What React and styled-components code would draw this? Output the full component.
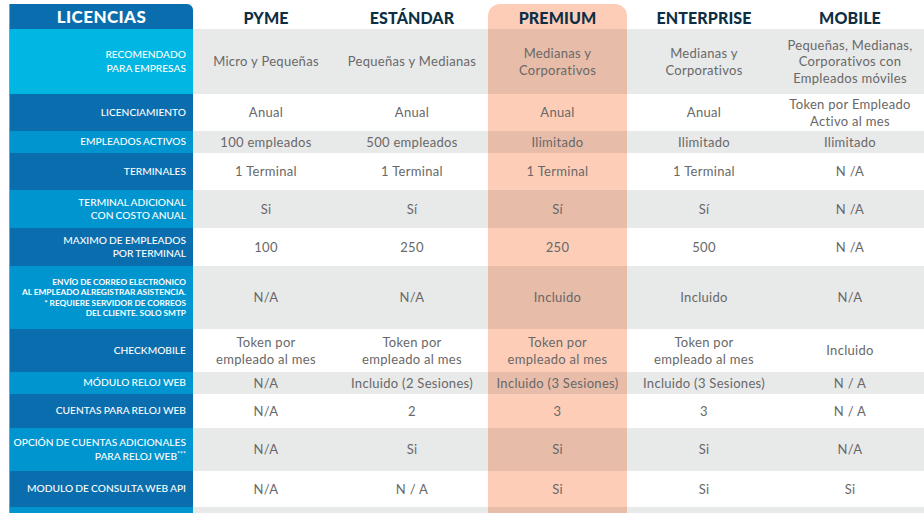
import styled, { createGlobalStyle } from 'styled-components';

const GlobalStyle = createGlobalStyle`
    html, body {
        margin: 0;
        padding: 0;
        background: #fff;
        overflow: hidden;
    }
    body {
        font-family: Lato, "Open Sans", sans-serif;
    }
`;

const Page = styled.div`
    padding: 4px 0 0 9px;
    height: 509px;
    overflow: hidden;
`;

const Row = styled.div`
    display: grid;
    grid-template-columns: 184px repeat(5, 146px);
    height: ${p => p.$h}px;
    background: ${p => (p.$alt ? '#e8e9e9' : '#fff')};
`;

const labelTones = {
    head: '#0a6eae',
    light: '#00b7e3',
    mid: '#0095cf',
    dark: '#0a6eae',
};

const Label = styled.div`
    display: flex;
    align-items: center;
    justify-content: flex-end;
    text-align: right;
    white-space: nowrap;
    padding-right: 7px;
    background: ${p => labelTones[p.$tone]};
    border-left: 1px solid #5fa9d9;
    color: #fff;
    font-size: ${p => (p.$small ? '8.3px' : '10.2px')};
    line-height: ${p => (p.$small ? '10.5px' : '13.5px')};
    font-weight: ${p => (p.$small ? 700 : 500)};
    text-transform: uppercase;
    word-spacing: ${p => (p.$small ? '-0.2px' : '-0.4px')};

    sup {
        font-size: 7px;
        vertical-align: 3px;
        line-height: 0;
    }
`;

const HeadLabel = styled(Label)`
    justify-content: center;
    padding-right: 0;
    font-size: 17px;
    font-weight: 900;
    border-top-right-radius: 6px;
    letter-spacing: 0.4px;
    word-spacing: 0;
`;

const Cell = styled.div`
    display: flex;
    align-items: center;
    justify-content: center;
    text-align: center;
    color: #686868;
    font-size: 13px;
    line-height: 16.5px;
    letter-spacing: 0.3px;
    margin: ${p => (p.$premium ? '0 4px 0 3px' : '0')};
    background: ${p =>
        p.$premium ? (p.$alt ? '#e7bca9' : '#fdcdb8') : 'transparent'};
`;

const Title = styled(Cell)`
    color: #0d2f45;
    font-size: 16px;
    font-weight: 900;
    letter-spacing: 0.1px;
    padding-top: 4px;
    border-radius: ${p => (p.$premium ? '12px 12px 0 0' : '0')};
`;

const plans = ['PYME', 'ESTÁNDAR', 'PREMIUM', 'ENTERPRISE', 'MOBILE'];
const PREMIUM = 2;

const rows = [
    {
        h: 65, tone: 'light',
        label: ['RECOMENDADO', 'PARA EMPRESAS'],
        values: [
            ['Micro y Pequeñas'],
            ['Pequeñas y Medianas'],
            ['Medianas y', 'Corporativos'],
            ['Medianas y', 'Corporativos'],
            ['Pequeñas, Medianas,', 'Corporativos con', 'Empleados móviles'],
        ],
    },
    {
        h: 37, label: ['LICENCIAMIENTO'],
        values: [['Anual'], ['Anual'], ['Anual'], ['Anual'], ['Token por Empleado', 'Activo al mes']],
    },
    {
        h: 22, label: ['EMPLEADOS ACTIVOS'],
        values: [['100 empleados'], ['500 empleados'], ['Ilimitado'], ['Ilimitado'], ['Ilimitado']],
    },
    {
        h: 37, label: ['TERMINALES'],
        values: [['1 Terminal'], ['1 Terminal'], ['1 Terminal'], ['1 Terminal'], ['N /A']],
    },
    {
        h: 38, label: ['TERMINAL ADICIONAL', 'CON COSTO ANUAL'],
        values: [['Si'], ['Sí'], ['Sí'], ['Sí'], ['N /A']],
    },
    {
        h: 38, label: ['MAXIMO DE EMPLEADOS', 'POR TERMINAL'],
        values: [['100'], ['250'], ['250'], ['500'], ['N /A']],
    },
    {
        h: 63, small: true,
        label: [
            'ENVÍO DE CORREO ELECTRÓNICO',
            'AL EMPLEADO ALREGISTRAR ASISTENCIA.',
            '* REQUIERE SERVIDOR DE CORREOS',
            'DEL CLIENTE. SOLO SMTP',
        ],
        values: [['N/A'], ['N/A'], ['Incluido'], ['Incluido'], ['N/A']],
    },
    {
        h: 43, label: ['CHECKMOBILE'],
        values: [
            ['Token por', 'empleado al mes'],
            ['Token por', 'empleado al mes'],
            ['Token por', 'empleado al mes'],
            ['Token por', 'empleado al mes'],
            ['Incluido'],
        ],
    },
    {
        h: 22, label: ['MÓDULO RELOJ WEB'],
        values: [['N/A'], ['Incluido (2 Sesiones)'], ['Incluido (3 Sesiones)'], ['Incluido (3 Sesiones)'], ['N / A']],
    },
    {
        h: 34, label: ['CUENTAS PARA RELOJ WEB'],
        values: [['N/A'], ['2'], ['3'], ['3'], ['N / A']],
    },
    {
        h: 43, label: ['OPCIÓN DE CUENTAS ADICIONALES', 'PARA RELOJ WEB'], sup: true,
        values: [['N/A'], ['Si'], ['Si'], ['Si'], ['N/A']],
    },
    {
        h: 36, label: ['MODULO DE CONSULTA WEB API'],
        values: [['N/A'], ['N / A'], ['Si'], ['Si'], ['Si']],
    },
    {
        h: 40, label: ['SOPORTE TÉCNICO'],
        values: [
            ['3 Clasificación', 'de soporte'],
            ['Incluido', 'de soporte'],
            ['Incluido', 'de soporte'],
            ['Incluido', 'de soporte'],
            ['Incluido', 'de soporte'],
        ],
    },
];

const Lines = ({ lines, sup }) =>
    lines.map((line, i) => (
        <span key={i}>
            {i > 0 && <br />}
            {line}
            {sup && i === lines.length - 1 && <sup>***</sup>}
        </span>
    ));

const App = () => (
    <>
        <GlobalStyle />
        <Page>
            <Row $h={25}>
                <HeadLabel $tone="head">LICENCIAS</HeadLabel>
                {plans.map((plan, i) => (
                    <Title key={plan} $premium={i === PREMIUM}>{plan}</Title>
                ))}
            </Row>
            {rows.map((row, r) => {
                const alt = r % 2 === 0;
                const tone = row.tone || (alt ? 'mid' : 'dark');
                return (
                    <Row key={r} $h={row.h} $alt={alt}>
                        <Label $tone={tone} $small={row.small}>
                            <div><Lines lines={row.label} sup={row.sup} /></div>
                        </Label>
                        {row.values.map((v, i) => (
                            <Cell key={i} $premium={i === PREMIUM} $alt={alt}>
                                <div><Lines lines={v} /></div>
                            </Cell>
                        ))}
                    </Row>
                );
            })}
        </Page>
    </>
);

export default App;
